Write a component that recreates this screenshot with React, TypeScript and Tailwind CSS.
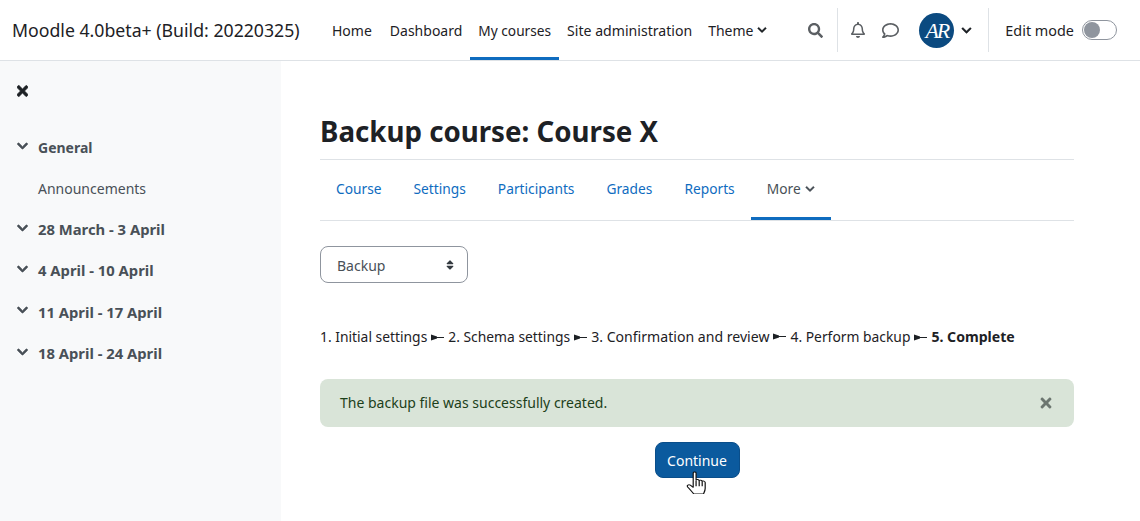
import { FaChevronDown, FaRegBell, FaRegComment, FaSearch, FaSort, FaTimes } from 'react-icons/fa';

const tabs = ['Course', 'Settings', 'Participants', 'Grades', 'Reports'];
const sections = ['28 March - 3 April', '4 April - 10 April', '11 April - 17 April', '18 April - 24 April'];
const steps = ['1. Initial settings', '2. Schema settings', '3. Confirmation and review', '4. Perform backup'];

function StepArrow() {
  return (
    <svg width="13" height="7" viewBox="0 0 13 7" className="mx-[4px] inline-block">
      <path d="M0 0.5 L6 2.5 L6 4.5 L0 6.5 Z" fill="#1d2125" />
      <rect x="6" y="3" width="7" height="1" fill="#1d2125" />
    </svg>
  );
}

function HandCursor() {
  return (
    <svg width="21.6" height="23" viewBox="0 0 18 24" preserveAspectRatio="none" className="absolute left-[30px] top-[28px]">
      <path
        d="M6 2 C6 .6 8.4 .6 8.4 2 L8.4 9.5 C8.8 8.6 10.8 8.6 11 10 C11.6 9.2 13.2 9.4 13.5 10.8 C14.2 10.2 15.8 10.5 16 12 L16 18 C16 21 15 22.5 14.5 24 L6.5 24 C5 21.5 3.5 19.5 1.4 16.6 C.4 15 2.2 13.6 3.6 14.8 L6 17 Z"
        fill="#fff"
        stroke="#111"
        strokeWidth="1"
        strokeLinejoin="round"
      />
      <path d="M8.4 10 V16 M11 10 V16 M13.5 11 V16" stroke="#111" strokeWidth="1" fill="none" />
    </svg>
  );
}

export default function App() {
  return (
    <div className="flex h-[521px] w-[1140px] flex-col overflow-hidden bg-white font-['Noto_Sans',sans-serif] text-[14px] text-[#1d2125]">
      {/* navbar */}
      <header className="flex h-[61px] shrink-0 items-center border-b border-[#dee2e6] pl-[12px]">
        <div className="w-[312px] shrink-0 pt-px text-[17.7px] whitespace-nowrap">Moodle 4.0beta+ (Build: 20220325)</div>
        <nav className="flex h-full items-stretch">
          <a className="mr-[2px] flex items-center border-b-[3px] border-transparent px-[8px] pt-[3px] whitespace-nowrap">Home</a>
          <a className="flex items-center border-b-[3px] border-transparent px-[8px] pt-[3px] whitespace-nowrap">Dashboard</a>
          <a className="flex items-center border-b-[3px] border-[#0f6cbf] px-[8px] pt-[5px] text-[13.7px] whitespace-nowrap">My courses</a>
          <a className="flex items-center border-b-[3px] border-transparent px-[8px] pt-[5px] text-[14.1px] whitespace-nowrap">Site administration</a>
          <a className="flex items-center gap-[4px] border-b-[3px] border-transparent px-[8px] pt-[3px] whitespace-nowrap">
            Theme <FaChevronDown className="stroke-current stroke-[20] text-[10px]" />
          </a>
        </nav>
        <div className="ml-auto flex h-full items-center">
          <FaSearch className="text-[15px] text-[#5b5f63]" />
          <div className="ml-[14px] h-[44px] w-px bg-[#dee2e6]" />
          <FaRegBell className="ml-[12px] text-[16px] text-[#5b5f63]" />
          <FaRegComment className="ml-[16px] text-[17px] text-[#5b5f63]" />
          <div className="ml-[20px] flex h-[35px] w-[35px] items-center justify-center rounded-full bg-[#0b4a80] font-['Liberation_Serif',serif] text-[22px] tracking-[-2px] text-white italic">
            AR
          </div>
          <FaChevronDown className="ml-[7px] stroke-current stroke-[20] text-[11px]" />
          <div className="ml-[16px] h-[44px] w-px bg-[#dee2e6]" />
          <span className="ml-[16px] pt-px text-[14.4px] whitespace-nowrap">Edit mode</span>
          <div className="mr-[23px] ml-[8px] flex h-[20px] w-[35px] items-center rounded-full border border-[#8f959e] bg-white pl-px">
            <div className="h-[16px] w-[16px] rounded-full bg-[#8f959e]" />
          </div>
        </div>
      </header>

      <div className="flex min-h-0 flex-1">
        {/* course index */}
        <aside className="w-[281px] shrink-0 bg-[#f8f9fa] pt-[22px] pl-[17px] text-[#495057]">
          <FaTimes className="h-[16px] w-[11px] stroke-current stroke-[20] text-[#1d2125]" />
          <div className="mt-[28px] flex h-[41px] items-center font-bold">
            <FaChevronDown className="mr-[10px] mb-[3px] w-[11px] shrink-0 stroke-current stroke-[30] text-[12px]" />
            General
          </div>
          <div className="flex h-[40.5px] items-center pl-[21px]">Announcements</div>
          {sections.map((s) => (
            <div key={s} className="flex h-[41.3px] items-center text-[14.8px] font-bold whitespace-nowrap">
              <FaChevronDown className="mr-[10px] mb-[3px] w-[11px] shrink-0 stroke-current stroke-[30] text-[12px]" />
              {s}
            </div>
          ))}
        </aside>

        {/* main */}
        <main className="ml-[39px] w-[754px] pt-[52px]">
          <h1 className="h-[47px] border-b border-[#dee2e6] text-[27.7px] leading-[36px] font-bold">Backup course: Course X</h1>
          <div className="flex h-[61px] items-stretch border-b border-[#dee2e6] text-[13.75px] text-[#0f6cbf]">
            {tabs.map((t) => (
              <a key={t} className="flex items-center px-[16px] pb-[2px] whitespace-nowrap">
                {t}
              </a>
            ))}
            <a className="flex items-center gap-[4px] border-b-[3px] border-[#0f6cbf] px-[16px] pt-px whitespace-nowrap text-[#495057]">
              More <FaChevronDown className="stroke-current stroke-[20] text-[10px]" />
            </a>
          </div>

          <div className="mt-[25px] flex h-[37px] w-[148px] items-center justify-between rounded-[8px] border border-[#8f959e] pt-px pr-[11px] pl-[16px] text-[#495057]">
            Backup
            <FaSort className="text-[12px] text-[#343a40]" />
          </div>

          <div className="mt-[43px] flex h-[20px] items-center text-[13.85px] whitespace-nowrap">
            {steps.map((s, i) => (
              <span key={s} className={`flex items-center ${i === 2 ? 'pt-px text-[14.1px]' : 'pt-[3px]'}`}>
                {s}
                <StepArrow />
              </span>
            ))}
            <b className="pt-[2px] text-[14.1px]">5. Complete</b>
          </div>

          <div className="mt-[33px] flex h-[48px] items-center justify-between rounded-[8px] bg-[#d9e4d8] pr-[20px] pb-[2px] pl-[20px] text-[#1c3f1a]">
            The backup file was successfully created.
            <FaTimes className="mt-[2px] text-[16px] text-[#6c7670]" />
          </div>

          <div className="mt-[15px] flex justify-center">
            <button className="relative h-[36px] w-[85px] rounded-[8px] border border-[#0a4e8a] bg-[#0b5a9e] text-white">
              Continue
              <HandCursor />
            </button>
          </div>
        </main>
      </div>
    </div>
  );
}
